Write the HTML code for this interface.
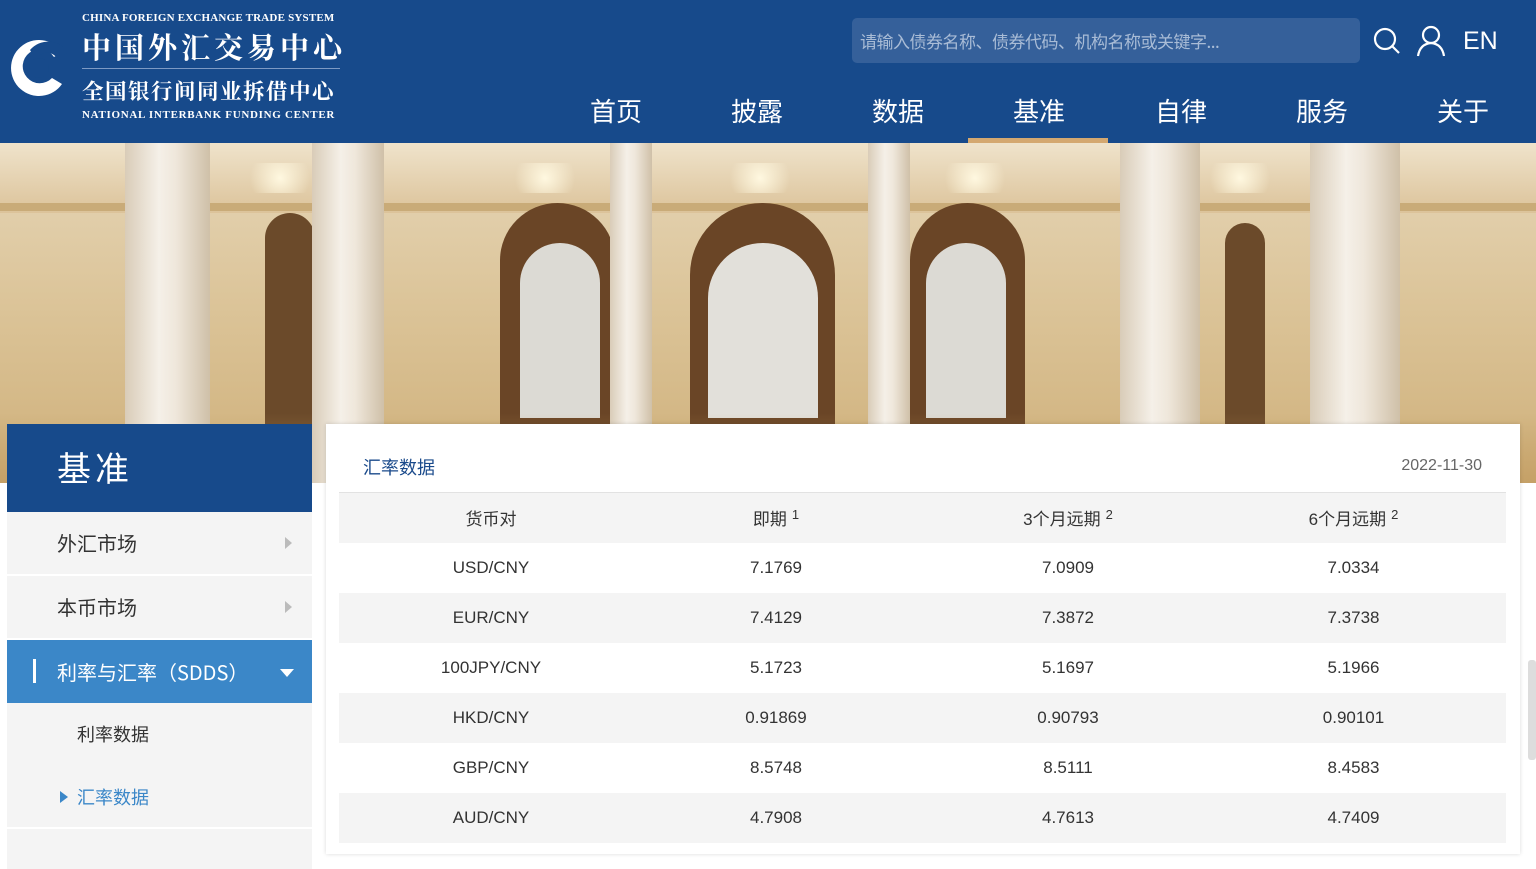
<!DOCTYPE html>
<html><head><meta charset="utf-8"><style>
*{margin:0;padding:0;box-sizing:border-box}
body{width:1536px;height:846px;overflow:hidden;background:#fff;font-family:"Liberation Sans","Noto Sans CJK SC",sans-serif;position:relative}
.hdr{position:absolute;left:0;top:0;width:1536px;height:143px;background:#174a8b}
.banner{position:absolute;left:0;top:143px;width:1536px;height:340px;background:linear-gradient(180deg,#e6d6b8 0%,#dcc59a 45%,#cfb07a 100%);overflow:hidden}
.ab{position:absolute}
.nav{position:absolute;top:92px;color:#fff;font-size:26px;font-family:"Noto Sans CJK SC",sans-serif}
.side{position:absolute;left:7px;top:424px;width:305px}
.card{position:absolute;left:326px;top:424px;width:1194px;height:430px;background:#fff;box-shadow:0 0 4px rgba(0,0,0,.15)}
table{position:absolute;left:13px;top:68px;width:1167px;border-collapse:collapse;border-top:1px solid #e2e2e2;table-layout:fixed}
td{height:50px;text-align:center;font-size:17px;color:#333}
td:nth-child(4){padding-right:26px}
tr:nth-child(odd) td{background:#f4f4f4}
sup{font-size:13px;vertical-align:6px;margin-left:5px}
.item{height:64px;background:#f4f4f4;border-bottom:2px solid #fff;font-size:20px;color:#333;padding-left:50px;line-height:62px;position:relative;font-family:"Noto Sans CJK SC",sans-serif}
.arr{position:absolute;right:20px;top:25px;width:0;height:0;border-left:7px solid #bbb;border-top:6px solid transparent;border-bottom:6px solid transparent}
.col{position:absolute;top:0;height:340px;background:linear-gradient(90deg,#d9ccb8,#f5f0e8 40%,#efe7db 60%,#cfc0a8)}
</style></head><body>
<div class="hdr">
  <svg style="position:absolute;left:8px;top:36px" width="62" height="62" viewBox="0 0 62 62"><path d="M54 16 A28 28 0 1 0 54 48 L44 42 A17 17 0 1 1 46 21 Z" fill="#fff"/><path d="M28 24 A12 12 0 0 1 50 24 L60 16 A24 24 0 0 0 22 14 Z" fill="#174a8b"/><circle cx="31" cy="32" r="10" fill="#174a8b"/></svg>
  <div style="position:absolute;left:82px;top:12px;color:#fff;font-family:'Liberation Serif',serif;font-size:11px;letter-spacing:.2px;font-weight:bold">CHINA FOREIGN EXCHANGE TRADE SYSTEM</div>
  <div style="position:absolute;left:82px;top:26px;color:#fff;font-family:'Noto Serif CJK SC',serif;font-size:29px;font-weight:bold;letter-spacing:4px">中国外汇交易中心</div>
  <div style="position:absolute;left:82px;top:68px;width:258px;height:1px;background:#7d9ac4"></div>
  <div style="position:absolute;left:82px;top:75px;color:#fff;font-family:'Noto Serif CJK SC',serif;font-size:21.5px;font-weight:bold;letter-spacing:1.5px">全国银行间同业拆借中心</div>
  <div style="position:absolute;left:82px;top:109px;color:#fff;font-family:'Liberation Serif',serif;font-size:11px;letter-spacing:.7px;font-weight:bold">NATIONAL INTERBANK FUNDING CENTER</div>
  <div style="position:absolute;left:852px;top:18px;width:508px;height:45px;background:#35609a;border-radius:5px;color:#a9bcd6;font-size:17px;line-height:45px;padding-left:8px;font-family:'Noto Sans CJK SC',sans-serif;letter-spacing:-.5px">请输入债券名称、债券代码、机构名称或关键字...</div>
  <svg style="position:absolute;left:1373px;top:27px" width="28" height="28" viewBox="0 0 28 28"><circle cx="12" cy="12" r="10" fill="none" stroke="#fff" stroke-width="2.2"/><path d="M19 19l7 7" stroke="#fff" stroke-width="2.2"/></svg>
  <svg style="position:absolute;left:1416px;top:25px" width="30" height="32" viewBox="0 0 30 32"><circle cx="15" cy="10" r="8" fill="none" stroke="#fff" stroke-width="2.2"/><path d="M2 31 Q4 19 15 18 Q26 19 28 31" fill="none" stroke="#fff" stroke-width="2.2"/></svg>
  <div style="position:absolute;left:1463px;top:27px;color:#fff;font-size:25px">EN</div>
  <div class="nav" style="left:590px">首页</div>
  <div class="nav" style="left:731px">披露</div>
  <div class="nav" style="left:872px">数据</div>
  <div class="nav" style="left:1013px">基准</div>
  <div class="nav" style="left:1155px">自律</div>
  <div class="nav" style="left:1296px">服务</div>
  <div class="nav" style="left:1437px">关于</div>
  <div style="position:absolute;left:968px;top:138px;width:140px;height:5px;background:#d4a870"></div>
</div>
<div class="banner">
  <div class="ab" style="left:0;top:0;width:1536px;height:70px;background:linear-gradient(#efe3cb,#dcc39a)"></div>
  <div class="ab" style="left:0;top:60px;width:1536px;height:8px;background:#c9ab78"></div>
  <div class="ab" style="left:265px;top:70px;width:50px;height:270px;background:#6b4a2a;border-radius:25px 25px 0 0"></div>
  <div class="ab" style="left:500px;top:60px;width:115px;height:280px;background:#6a4526;border-radius:58px 58px 0 0"></div>
  <div class="ab" style="left:690px;top:60px;width:145px;height:280px;background:#6a4526;border-radius:72px 72px 0 0"></div>
  <div class="ab" style="left:910px;top:60px;width:115px;height:280px;background:#6a4526;border-radius:58px 58px 0 0"></div>
  <div class="ab" style="left:1225px;top:80px;width:40px;height:260px;background:#6b4a2a;border-radius:20px 20px 0 0"></div>
  <div class="ab" style="left:520px;top:100px;width:80px;height:175px;background:#dcdad4;border-radius:40px 40px 0 0"></div>
  <div class="ab" style="left:708px;top:100px;width:110px;height:175px;background:#e2e0da;border-radius:55px 55px 0 0"></div>
  <div class="ab" style="left:926px;top:100px;width:80px;height:175px;background:#dcdad4;border-radius:40px 40px 0 0"></div>
  <div class="ab" style="left:0;top:20px;width:1536px;height:30px;background:radial-gradient(circle at 280px 15px,#fff8e0 0,transparent 30px),radial-gradient(circle at 545px 15px,#fff8e0 0,transparent 30px),radial-gradient(circle at 760px 15px,#fff8e0 0,transparent 30px),radial-gradient(circle at 975px 15px,#fff8e0 0,transparent 30px),radial-gradient(circle at 1240px 15px,#fff8e0 0,transparent 30px)"></div>
  <div class="ab" style="left:0;top:270px;width:1536px;height:70px;background:linear-gradient(rgba(200,165,110,0),rgba(190,150,90,.6))"></div>
  <div class="col" style="left:125px;width:85px"></div>
  <div class="col" style="left:312px;width:72px"></div>
  <div class="col" style="left:610px;width:42px"></div>
  <div class="col" style="left:868px;width:42px"></div>
  <div class="col" style="left:1120px;width:80px"></div>
  <div class="col" style="left:1310px;width:90px"></div>
</div>
<div class="side">
  <div style="height:88px;background:#174a8b;color:#fff;font-size:34px;padding-left:50px;line-height:86px;font-family:'Noto Sans CJK SC',sans-serif;letter-spacing:4px">基准</div>
  <div class="item">外汇市场<span class="arr"></span></div>
  <div class="item">本币市场<span class="arr"></span></div>
  <div class="item" style="background:#3b87c8;color:#fff;border:none;height:63px;line-height:63px">利率与汇率（SDDS）<span style="position:absolute;left:26px;top:19px;width:3px;height:24px;background:#fff"></span><span style="position:absolute;right:18px;top:29px;border-top:8px solid #fff;border-left:7px solid transparent;border-right:7px solid transparent"></span></div>
  <div style="height:63px;background:#f4f4f4;font-size:18px;color:#333;padding-left:70px;line-height:63px;font-family:'Noto Sans CJK SC',sans-serif">利率数据</div>
  <div style="height:63px;background:#f4f4f4;font-size:18px;color:#3b87c8;padding-left:70px;line-height:63px;position:relative;font-family:'Noto Sans CJK SC',sans-serif;border-bottom:2px solid #fff"><span style="position:absolute;left:53px;top:25px;border-left:8px solid #3b87c8;border-top:6px solid transparent;border-bottom:6px solid transparent"></span>汇率数据</div>
  <div style="height:40px;background:#f4f4f4"></div>
</div>
<div class="card">
  <div style="position:absolute;left:37px;top:30px;color:#1a4a8b;font-size:18px;font-family:'Noto Sans CJK SC',sans-serif">汇率数据</div>
  <div style="position:absolute;right:38px;top:33px;color:#666;font-size:16px">2022-11-30</div>
  <table>
    <colgroup><col style="width:304px"><col style="width:266px"><col style="width:318px"><col style="width:279px"></colgroup>
    <tr><td>货币对</td><td>即期<sup>1</sup></td><td>3个月远期<sup>2</sup></td><td>6个月远期<sup>2</sup></td></tr>
    <tr><td>USD/CNY</td><td>7.1769</td><td>7.0909</td><td>7.0334</td></tr>
    <tr><td>EUR/CNY</td><td>7.4129</td><td>7.3872</td><td>7.3738</td></tr>
    <tr><td>100JPY/CNY</td><td>5.1723</td><td>5.1697</td><td>5.1966</td></tr>
    <tr><td>HKD/CNY</td><td>0.91869</td><td>0.90793</td><td>0.90101</td></tr>
    <tr><td>GBP/CNY</td><td>8.5748</td><td>8.5111</td><td>8.4583</td></tr>
    <tr><td>AUD/CNY</td><td>4.7908</td><td>4.7613</td><td>4.7409</td></tr>
  </table>
</div>
<div style="position:absolute;left:1528px;top:660px;width:8px;height:100px;background:#ddd;border-radius:3px"></div>
</body></html>
